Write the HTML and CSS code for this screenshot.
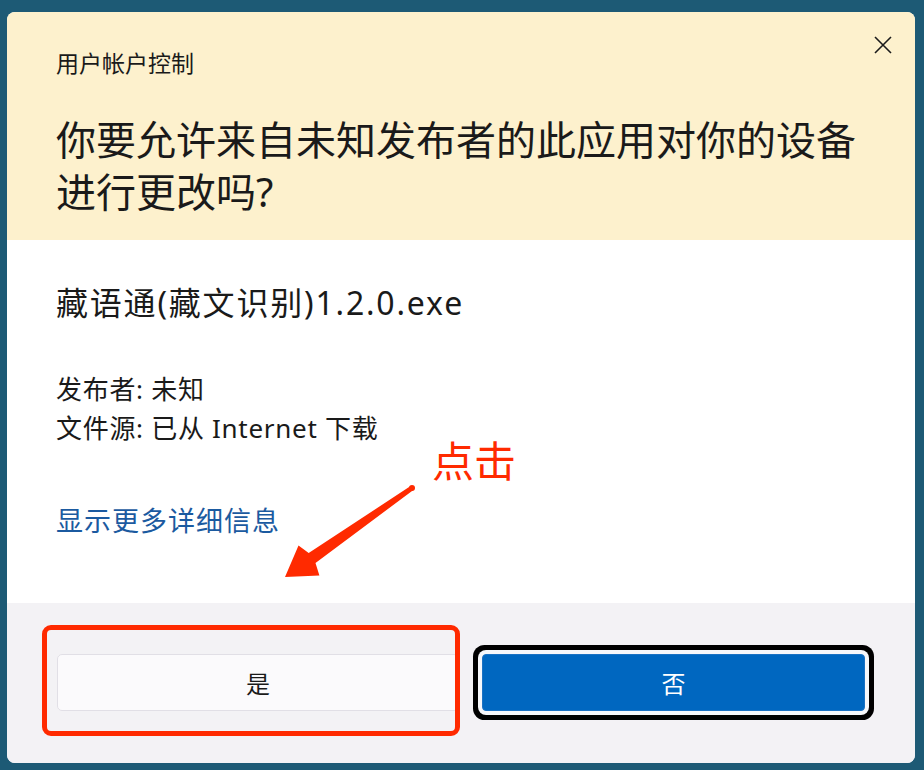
FILE: index.html
```html
<!DOCTYPE html>
<html lang="zh-CN">
<head>
<meta charset="utf-8">
<title>用户帐户控制</title>
<link rel="stylesheet" href="styles.css">
</head>
<body>
<div class="dialog">
  <header class="head">
    <div class="caption">用户帐户控制</div>
    <h1 class="question">你要允许来自未知发布者的此应用对你的设备进行更改吗?</h1>
    <svg class="close" viewBox="0 0 18 18" width="18" height="18"><path d="M1 1 L17 17 M17 1 L1 17" stroke="#1b1b1b" stroke-width="1.6" fill="none"/></svg>
  </header>
  <section class="body">
    <div class="app">藏语通(藏文识别)1.2.0.exe</div>
    <div class="meta">
      <div>发布者: 未知</div>
      <div>文件源: 已从 Internet 下载</div>
    </div>
    <a class="more" href="#">显示更多详细信息</a>
  </section>
  <footer class="foot">
    <div class="buttons">
      <button class="btn yes">是</button>
      <button class="btn no">否</button>
    </div>
    <div class="redbox"></div>
  </footer>
</div>
<div class="note">点击</div>
<svg class="arrow" width="924" height="770" viewBox="0 0 924 770">
  <circle cx="412" cy="488" r="3" fill="#ff2a00"/>
  <polygon fill="#ff2a00" points="410.6,486 308.7,553.1 298.5,545.6 285,577 319.4,575.5 315.5,562.9 413.4,490"/>
</svg>
</body>
</html>
```
FILE: styles.css
```css
html, body {
  margin: 0;
  padding: 0;
}
body {
  background: #1d5a75;
  width: 924px;
  height: 770px;
  overflow: hidden;
  position: relative;
  font-family: "Noto Sans", "Noto Sans CJK SC", sans-serif;
  color: #1a1a1a;
}
.dialog {
  margin: 12px 0 0 7px;
  width: 908px;
  height: 751px;
  border-radius: 8px;
  overflow: hidden;
  display: flex;
  flex-direction: column;
  background: #fff;
}
.head {
  position: relative;
  background: #fdf1cd;
  height: 228px;
  box-sizing: border-box;
  padding: 36px 40px 0 49px;
}
.caption {
  font-size: 23px;
  line-height: 30px;
}
.question {
  margin: 36px 0 0 0;
  font-weight: normal;
  font-size: 40px;
  line-height: 52px;
  letter-spacing: 0;
}
.close {
  position: absolute;
  right: 23px;
  top: 24px;
}
.body {
  height: 363px;
  box-sizing: border-box;
  padding: 42px 49px 0 49px;
  display: flex;
  flex-direction: column;
  align-items: flex-start;
}
.app {
  font-size: 32px;
  line-height: 42px;
  letter-spacing: 1.8px;
}
.meta {
  margin-top: 46px;
  font-size: 26px;
  line-height: 39px;
  letter-spacing: 0.7px;
}
.more {
  margin-top: 55px;
  font-size: 27px;
  line-height: 36px;
  letter-spacing: 1px;
  color: #1b5aa0;
  text-decoration: none;
}
.foot {
  position: relative;
  flex: 1;
  background: #f3f2f5;
  padding: 51px 50px 0 50px;
}
.buttons {
  display: grid;
  grid-template-columns: 402px 383px;
  column-gap: 23px;
}
.btn {
  font-family: "Noto Sans CJK SC", sans-serif;
  font-size: 24px;
  height: 57px;
  border-radius: 5px;
  padding: 0;
}
.yes {
  background: #fbfafc;
  border: 1px solid #e1dfe6;
  color: #1a1a1a;
}
.no {
  background: #0067c0;
  border: 1px solid #1b72c4;
  color: #fff;
  box-shadow: 0 0 0 4px #f7f8fb, 0 0 0 9px #000;
  border-radius: 4px;
}
.redbox {
  position: absolute;
  left: 35px;
  top: 22px;
  width: 408px;
  height: 101px;
  border: 5px solid #ff2a00;
  border-radius: 9px;
}
.note {
  position: absolute;
  left: 432px;
  top: 431px;
  font-family: "Noto Sans CJK SC", sans-serif;
  font-size: 42px;
  line-height: 56px;
  color: #ff2a00;
}
.arrow {
  position: absolute;
  left: 0;
  top: 0;
  pointer-events: none;
}
```
